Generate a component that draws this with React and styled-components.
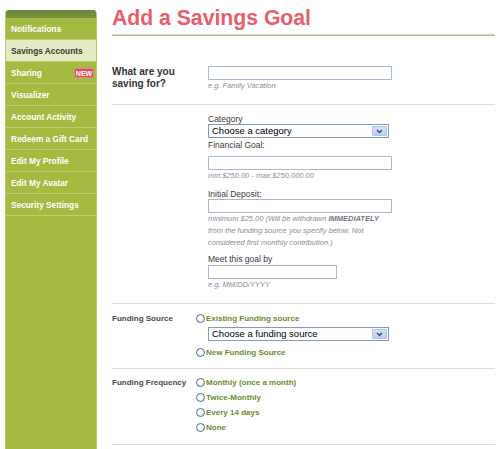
import React from 'react';
import styled, { createGlobalStyle } from 'styled-components';

const GlobalStyle = createGlobalStyle`
    html, body {
        margin: 0;
        padding: 0;
        background: #fff;
    }
    body {
        font-family: "Liberation Sans", Arial, sans-serif;
    }
    * {
        box-sizing: border-box;
    }
`;

const menu = [
    { label: 'Notifications' },
    { label: 'Savings Accounts', active: true },
    { label: 'Sharing', badge: 'NEW' },
    { label: 'Visualizer' },
    { label: 'Account Activity' },
    { label: 'Redeem a Gift Card' },
    { label: 'Edit My Profile' },
    { label: 'Edit My Avatar' },
    { label: 'Security Settings' },
];

const Chevron = () => (
    <svg width="7" height="5" viewBox="0 0 7 5">
        <path d="M1 1 L3.5 3.5 L6 1" fill="none" stroke="#2d4a7a" strokeWidth="1.4" />
    </svg>
);

const Select = ({ text }) => (
    <SelectBox>
        <span>{text}</span>
        <ArrowBox><Chevron /></ArrowBox>
    </SelectBox>
);

const Radio = ({ children }) => (
    <RadioRow>
        <RadioDot />
        {children}
    </RadioRow>
);

const App = () => {
    return (
        <Page>
            <GlobalStyle />
            <Sidebar>
                <SidebarCap />
                {menu.map((item) => (
                    <MenuItem key={item.label} $active={item.active}>
                        {item.label}
                        {item.badge && <Badge>{item.badge}</Badge>}
                    </MenuItem>
                ))}
            </Sidebar>

            <Main>
                <Title>Add a Savings Goal</Title>
                <TitleRule />

                <Section $pad="30px 0 13px">
                    <QuestionLabel>What are you<br />saving for?</QuestionLabel>
                    <Fields $indent>
                        <TextInput $width={184} />
                        <Hint>e.g. Family Vacation</Hint>
                    </Fields>
                </Section>

                <Section $pad="9px 0 13px">
                    <div />
                    <Fields $indent>
                        <FieldLabel>Category</FieldLabel>
                        <Select text="Choose a category" />

                        <FieldLabel $mt={2}>Financial Goal:</FieldLabel>
                        <TextInput $width={184} $mt={6} />
                        <Hint>min:$250.00 - max:$250,000.00</Hint>

                        <FieldLabel $mt={8}>Initial Deposit:</FieldLabel>
                        <TextInput $width={184} />
                        <Hint $lh={12} $mt={0}>
                            minimum $25.00 (Will be withdrawn <b>IMMEDIATELY</b><br />
                            from the funding source you specify below. Not<br />
                            considered first monthly contribution.)
                        </Hint>

                        <FieldLabel $mt={5}>Meet this goal by</FieldLabel>
                        <TextInput $width={129} $mt={1} />
                        <Hint>e.g. MM/DD/YYYY</Hint>
                    </Fields>
                </Section>

                <Section $pad="7px 0 8px">
                    <SectionLabel>Funding Source</SectionLabel>
                    <Fields>
                        <Radio>Existing Funding source</Radio>
                        <Indented>
                            <Select text="Choose a funding source" />
                        </Indented>
                        <Spacer />
                        <Radio>New Funding Source</Radio>
                    </Fields>
                </Section>

                <Section $pad="6px 0 9px">
                    <SectionLabel>Funding Frequency</SectionLabel>
                    <Fields>
                        <Radio>Monthly (once a month)</Radio>
                        <Radio>Twice-Monthly</Radio>
                        <Radio>Every 14 days</Radio>
                        <Radio>None</Radio>
                    </Fields>
                </Section>
            </Main>
        </Page>
    );
};

export default App;

const Page = styled.div`
    display: flex;
    align-items: flex-start;
    width: 500px;
    min-height: 449px;
`;

const Sidebar = styled.nav`
    flex-shrink: 0;
    width: 92px;
    min-height: 439px;
    margin: 10px 0 0 5px;
    background: #a4ba40;
    border-left: 1px solid #b9cb6c;
    border-right: 1px solid #b9cb6c;
    border-radius: 4px 4px 0 0;
    overflow: hidden;
`;

const SidebarCap = styled.div`
    height: 8px;
    margin: 0 -1px;
    background: linear-gradient(#67853a, #789442);
`;

const MenuItem = styled.a`
    display: flex;
    align-items: center;
    justify-content: space-between;
    height: 22px;
    padding: 1px 2px 0 5px;
    border-bottom: 1px solid #bccd74;
    background: ${(p) => (p.$active ? '#e3ebc4' : 'transparent')};
    color: ${(p) => (p.$active ? '#3a3a30' : '#ffffff')};
    font: bold 8.3px/1 "Liberation Sans", Arial, sans-serif;
    white-space: nowrap;
    cursor: pointer;
`;

const Badge = styled.span`
    display: flex;
    align-items: center;
    justify-content: center;
    width: 20px;
    height: 10px;
    border-radius: 2px;
    background: #d8515e;
    border: 1px solid #e7838c;
    color: #fff;
    font: bold 7px/1 "Liberation Sans", Arial, sans-serif;
`;

const Main = styled.main`
    flex: 1;
    min-width: 0;
    padding: 6px 5px 0 15px;
`;

const Title = styled.h1`
    margin: 0;
    color: #e95d6b;
    font: bold 21.2px/24px "Liberation Sans", Arial, sans-serif;
`;

const TitleRule = styled.div`
    margin-top: 4px;
    height: 2px;
    border-top: 1px solid #d2d8c8;
    background: #aec294;
`;

const Section = styled.section`
    display: grid;
    grid-template-columns: 83px 1fr;
    padding: ${(p) => p.$pad};
    border-bottom: 1px solid #dddddd;
`;

const QuestionLabel = styled.div`
    color: #333;
    font: bold 10px/12px "Liberation Sans", Arial, sans-serif;
`;

const SectionLabel = styled.div`
    color: #4a4a4a;
    font: bold 8px/15px "Liberation Sans", Arial, sans-serif;
    white-space: nowrap;
`;

const Fields = styled.div`
    display: flex;
    flex-direction: column;
    align-items: flex-start;
    padding-left: ${(p) => (p.$indent ? '13px' : '0')};
`;

const FieldLabel = styled.div`
    margin-top: ${(p) => p.$mt || 0}px;
    color: #3a3a3a;
    font: 8.5px/10px "Liberation Sans", Arial, sans-serif;
`;

const TextInput = styled.input`
    display: block;
    width: ${(p) => p.$width}px;
    height: 14px;
    margin: ${(p) => p.$mt || 0}px 0 0;
    padding: 0 2px;
    border: 1px solid #a6b9d2;
    background: #fff;
    font-size: 9px;
    outline: none;
`;

const Hint = styled.div`
    margin-top: ${(p) => (p.$mt === undefined ? 1 : p.$mt)}px;
    color: #8c8c8c;
    font: italic 7.5px/${(p) => p.$lh || 10}px "Liberation Sans", Arial, sans-serif;
    white-space: nowrap;

    b {
        font-weight: bold;
        color: #777;
    }
`;

const SelectBox = styled.div`
    display: flex;
    align-items: center;
    width: 181px;
    height: 14px;
    padding: 0 1px 0 3px;
    border: 1px solid #7f9db9;
    background: #fff;
    color: #000;
    font: 9.5px/1 "Liberation Sans", Arial, sans-serif;
`;

const ArrowBox = styled.div`
    display: flex;
    align-items: center;
    justify-content: center;
    width: 15px;
    height: 10px;
    margin-left: auto;
    border: 1px solid #aec2ea;
    border-radius: 1px;
    background: linear-gradient(#d6e2f8, #bccff2);
`;

const Indented = styled.div`
    margin: 1px 0 0 13px;
`;

const Spacer = styled.div`
    height: 4px;
`;

const RadioRow = styled.label`
    display: flex;
    align-items: center;
    height: 15px;
    color: #6b8c2e;
    font: bold 8px/15px "Liberation Sans", Arial, sans-serif;
    white-space: nowrap;
`;

const RadioDot = styled.span`
    width: 9px;
    height: 9px;
    margin: 0 1px 0 1px;
    border: 1px solid #4a6c9e;
    border-radius: 50%;
    background: radial-gradient(circle at 40% 40%, #ffffff 30%, #d4dce8 100%);
`;
